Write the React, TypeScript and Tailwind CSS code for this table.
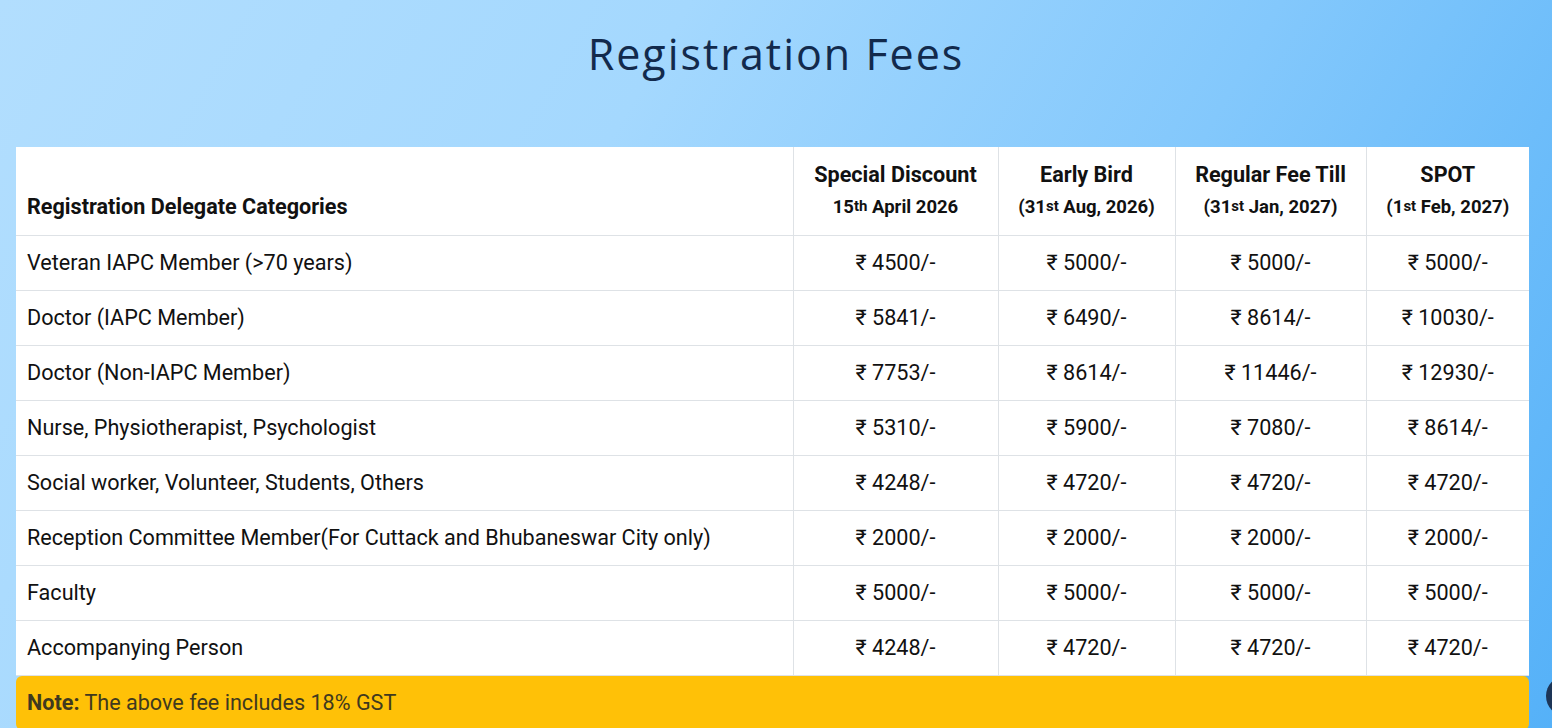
import React from "react";

const rows = [
  { name: "Veteran IAPC Member (>70 years)", fees: ["4500", "5000", "5000", "5000"] },
  { name: "Doctor (IAPC Member)", fees: ["5841", "6490", "8614", "10030"] },
  { name: "Doctor (Non-IAPC Member)", fees: ["7753", "8614", "11446", "12930"] },
  { name: "Nurse, Physiotherapist, Psychologist", fees: ["5310", "5900", "7080", "8614"] },
  { name: "Social worker, Volunteer, Students, Others", fees: ["4248", "4720", "4720", "4720"] },
  {
    name: "Reception Committee Member(For Cuttack and Bhubaneswar City only)",
    fees: ["2000", "2000", "2000", "2000"],
  },
  { name: "Faculty", fees: ["5000", "5000", "5000", "5000"] },
  { name: "Accompanying Person", fees: ["4248", "4720", "4720", "4720"] },
];

const Sup = ({ children }: { children: React.ReactNode }) => (
  <sup className="relative -top-[2px] text-[15px] font-bold">{children}</sup>
);

export default function App() {
  return (
    <div className="relative h-[728px] w-full overflow-hidden bg-[linear-gradient(120deg,#b2defe_0%,#a4d8fe_35%,#83c8fc_65%,#55b1f8_100%)] font-['Roboto',sans-serif]">
      <h1 className="pt-[26px] text-center font-['Open_Sans','Lato',sans-serif] text-[43px] font-medium leading-[56px] tracking-[2px] text-[#122a4c]">
        Registration Fees
      </h1>

      <div className="mx-[16px] mt-[65px] w-[1513px]">
        <table className="w-full border-collapse bg-white text-[21.6px] text-[#111]">
          <colgroup>
            <col className="w-[777px]" />
            <col className="w-[205px]" />
            <col className="w-[177px]" />
            <col className="w-[191px]" />
            <col className="w-[163px]" />
          </colgroup>
          <thead>
            <tr className="h-[88px] border-b border-[#dee2e6]">
              <th className="border-r border-[#dee2e6] px-[11px] pb-[13px] text-left align-bottom text-[21.6px] font-bold leading-[30px]">
                Registration Delegate Categories
              </th>
              <th className="border-r border-[#dee2e6] px-1 pt-[1px] align-middle text-[21.6px] font-bold leading-[33px]">
                Special Discount
                <div className="text-[18.5px] leading-[33px]">
                  15<Sup>th</Sup> April 2026
                </div>
              </th>
              <th className="border-r border-[#dee2e6] px-1 pt-[1px] align-middle text-[21.6px] font-bold leading-[33px]">
                Early Bird
                <div className="text-[18.5px] leading-[33px]">
                  (31<Sup>st</Sup> Aug, 2026)
                </div>
              </th>
              <th className="border-r border-[#dee2e6] px-1 pt-[1px] align-middle text-[21.6px] font-bold leading-[33px]">
                Regular Fee Till
                <div className="text-[18.5px] leading-[33px]">
                  (31<Sup>st</Sup> Jan, 2027)
                </div>
              </th>
              <th className="px-1 pt-[1px] align-middle text-[21.6px] font-bold leading-[33px]">
                SPOT
                <div className="text-[18.5px] leading-[33px]">
                  (1<Sup>st</Sup> Feb, 2027)
                </div>
              </th>
            </tr>
          </thead>
          <tbody>
            {rows.map((r) => (
              <tr key={r.name} className="h-[55px] border-b border-[#dee2e6]">
                <td className="border-r border-[#dee2e6] px-[11px] leading-[30px]">{r.name}</td>
                {r.fees.map((f, i) => (
                  <td
                    key={i}
                    className={`text-center leading-[30px] ${i < 3 ? "border-r border-[#dee2e6]" : ""}`}
                  >
                    ₹ {f}/-
                  </td>
                ))}
              </tr>
            ))}
          </tbody>
        </table>

        <div className="rounded-[6px] bg-[#ffc107] px-[11px] py-[12px] text-[21.6px] leading-[30px] text-[#40391f]">
          <span className="font-bold">Note:</span> The above fee includes 18% GST
        </div>
      </div>

      <div className="absolute right-[-34px] top-[676px] h-[40px] w-[40px] rounded-full bg-[#1d3557]" />
    </div>
  );
}
